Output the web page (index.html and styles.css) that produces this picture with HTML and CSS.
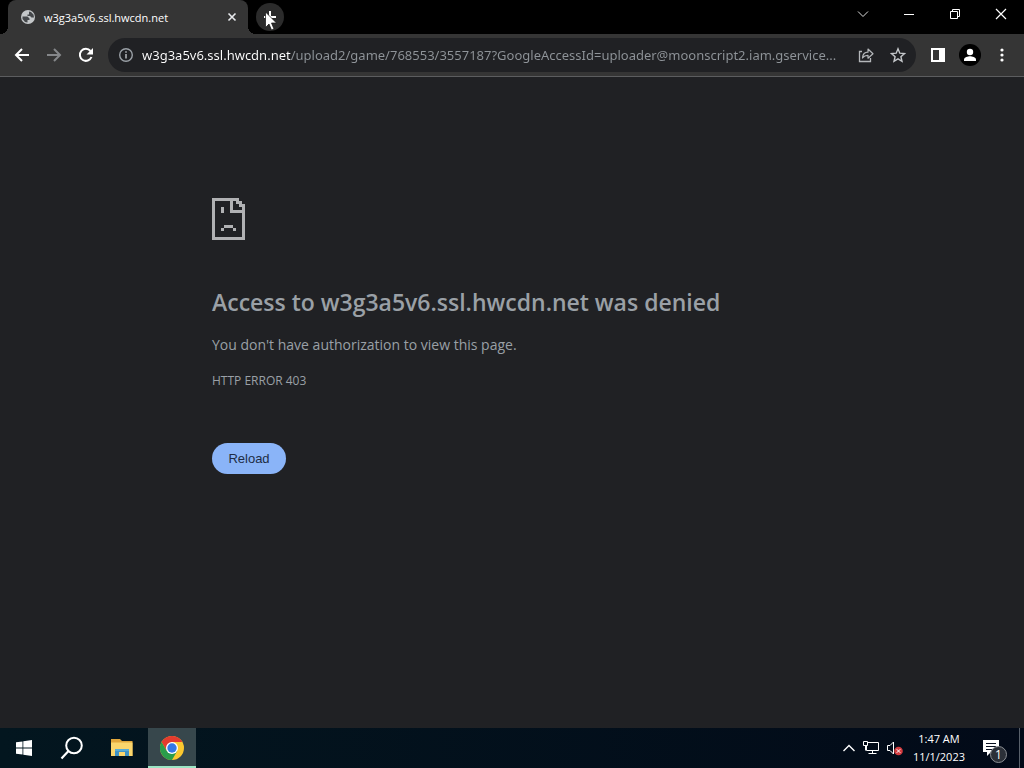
FILE: index.html
```html
<!DOCTYPE html>
<html lang="en">
<head>
  <meta charset="UTF-8" />
  <meta name="viewport" content="width=device-width, initial-scale=1.0" />
  <title>w3g3a5v6.ssl.hwcdn.net</title>
  <link rel="stylesheet" href="styles.css">
</head>
<body>
  <header class="browser">
    <div class="tab-strip">
      <div class="tab">
        <svg class="favicon" width="16" height="16" viewBox="0 0 16 16">
          <circle cx="8" cy="8" r="7" fill="#c4c7c9" />
          <path d="M2.500 7.500h5l2 2v1.500H7.500v2.500L5 13 2.500 10zM9 2.500l2 .4 2.500 2.600.5 3h-2.500L10 7H7.500V5.500H9z" fill="#45484b" />
        </svg>
        <span class="tab-title">w3g3a5v6.ssl.hwcdn.net</span>
        <button class="tab-close" aria-label="Close tab">
          <svg width="10" height="10" viewBox="0 0 10 10"><path d="M1.500 1.500l7 7M8.500 1.500l-7 7" stroke="#e8eaed" stroke-width="1.600" /></svg>
        </button>
      </div>
      <button class="new-tab" aria-label="New tab">
        <svg width="12" height="12" viewBox="0 0 12 12"><path d="M6 0v12M0 6h12" stroke="#fff" stroke-width="2" /></svg>
        <svg class="cursor" width="12" height="20" viewBox="0 0 12 20"><path d="M.5 1v15.500l3.500-3.500 2.500 6 2.500-1-2.500-6h5z" fill="#fff" stroke="#111" stroke-width=".7" /></svg>
      </button>
      <div class="window-buttons">
        <button aria-label="Search tabs">
          <svg width="12" height="12" viewBox="0 0 12 12"><path d="M1 3.500l5 5 5-5" fill="none" stroke="#ddd" /></svg>
        </button>
        <button aria-label="Minimize">
          <svg width="12" height="12" viewBox="0 0 12 12"><path d="M1 6.500h10" stroke="#fff" /></svg>
        </button>
        <button aria-label="Restore">
          <svg width="12" height="12" viewBox="0 0 12 12"><path d="M1.500 3.500h7v7h-7zM3.500 3.500v-2h7v7h-2" fill="none" stroke="#fff" /></svg>
        </button>
        <button aria-label="Close">
          <svg width="12" height="12" viewBox="0 0 12 12"><path d="M1 1l10 10M11 1L1 11" stroke="#fff" stroke-width="1.200" /></svg>
        </button>
      </div>
    </div>

    <div class="toolbar">
      <button class="tool" aria-label="Back">
        <svg width="16" height="16" viewBox="0 0 16 16"><path d="M15 8H2M8 2L2 8l6 6" fill="none" stroke="#fff" stroke-width="2" /></svg>
      </button>
      <button class="tool" aria-label="Forward" disabled>
        <svg width="16" height="16" viewBox="0 0 16 16"><path d="M1 8h13M8 2l6 6-6 6" fill="none" stroke="#85878a" stroke-width="2" /></svg>
      </button>
      <button class="tool" aria-label="Reload page">
        <svg width="16" height="16" viewBox="0 0 16 16"><path d="M13.500 10A6 6 0 1 1 12.500 4" fill="none" stroke="#fff" stroke-width="2" /><path d="M15 1v6.500H8.500z" fill="#fff" /></svg>
      </button>
      <div class="address-bar">
        <button class="site-info" aria-label="View site information">
          <svg width="16" height="16" viewBox="0 0 16 16"><circle cx="8" cy="8" r="6.300" fill="none" stroke="#9aa0a6" stroke-width="1.400" /><path d="M8 7v4.500M8 4.300v1.500" stroke="#b5b9bd" stroke-width="1.500" /></svg>
        </button>
        <input class="url" type="text" aria-label="Address and search bar" value="w3g3a5v6.ssl.hwcdn.net/upload2/game/768553/3557187?GoogleAccessId=uploader@moonscript2.iam.gservice...">
        <button class="bar-action" aria-label="Share this page">
          <svg width="16" height="16" viewBox="0 0 16 16"><path d="M4 4.500H1.500v10h11V11" fill="none" stroke="#b4b7ba" stroke-width="1.300" /><path d="M4.500 11c.3-4 2.500-5.800 5.500-5.800V2l5 4.700-5 4.500V8.300C7.500 8.200 6 9 4.500 11z" fill="none" stroke="#b4b7ba" stroke-width="1.200" stroke-linejoin="round" /></svg>
        </button>
        <button class="bar-action" aria-label="Bookmark this tab">
          <svg width="16" height="16" viewBox="0 0 16 16"><path d="M8 1.800l1.800 4.400 4.700.4-3.600 3.100 1.100 4.600L8 11.800l-4 2.500 1.100-4.600-3.600-3.100 4.700-.4z" fill="none" stroke="#c4c7ca" stroke-width="1.400" /></svg>
        </button>
      </div>
      <button class="tool" aria-label="Side panel">
        <svg width="16" height="16" viewBox="0 0 16 16"><path d="M1 1h14v14H1zM3 3v10h6V3z" fill="#fff" fill-rule="evenodd" /></svg>
      </button>
      <button class="tool" aria-label="Profile">
        <svg width="22" height="22" viewBox="0 0 22 22"><circle cx="11" cy="11" r="11" fill="#000" /><circle cx="11" cy="8" r="3.200" fill="#fff" /><path d="M5 17v-1.500c0-2.300 4-3.300 6-3.300s6 1 6 3.300V17z" fill="#fff" /></svg>
      </button>
      <button class="tool" aria-label="Menu">
        <svg width="16" height="16" viewBox="0 0 16 16" fill="#fff"><circle cx="8" cy="3" r="1.600" /><circle cx="8" cy="8" r="1.600" /><circle cx="8" cy="13" r="1.600" /></svg>
      </button>
    </div>
  </header>

  <main class="page">
    <div class="error">
      <svg class="error-icon" width="33" height="42" viewBox="0 0 11 14" shape-rendering="crispEdges">
        <path d="M0 0h9v1h1v1h1v12H0zM1 1v12h9V5H6V1zM7 1v3h3V3H9V2H8V1z" fill="#b0b1b3" fill-rule="evenodd" />
        <path d="M3 3h1v2H3zM4 9h3v1H4zM3 10h1v1H3zM7 10h1v1H7z" fill="#b0b1b3" />
      </svg>
      <h1>Access to w3g3a5v6.ssl.hwcdn.net was denied</h1>
      <p class="summary">You don't have authorization to view this page.</p>
      <p class="error-code">HTTP ERROR 403</p>
      <button class="reload">Reload</button>
    </div>
  </main>

  <footer class="taskbar">
    <button class="task" aria-label="Start">
      <svg width="16" height="16" viewBox="0 0 16 16" fill="#fff"><path d="M0 2.300l6.500-.9v6.200H0zM7.300 1.300L16 0v7.600H7.300zM0 8.400h6.500v6.200L0 13.700zM7.300 8.400H16V16l-8.700-1.300z" /></svg>
    </button>
    <button class="task" aria-label="Search">
      <svg width="24" height="24" viewBox="0 0 24 24"><circle cx="14" cy="9.500" r="7.800" fill="none" stroke="#fff" stroke-width="2" /><path d="M8.500 15L1.500 22.500" stroke="#fff" stroke-width="2.200" /></svg>
    </button>
    <button class="task" aria-label="File Explorer">
      <svg width="22" height="20" viewBox="0 0 22 20"><path d="M0 1h9l2 2h10.500v15H0z" fill="#e2a73b" /><path d="M0 4.500h21.500V18H0z" fill="#fbd66c" /><path d="M4 18v-7h14v7h-4v-4H8v4z" fill="#3f93c5" /><path d="M4 11h14v2H4z" fill="#58abd4" /></svg>
    </button>
    <button class="task active" aria-label="Google Chrome">
      <svg width="24" height="24" viewBox="0 0 24 24"><circle cx="12" cy="12" r="12" fill="#fbc82f" /><path d="M1.600 6A12 12 0 0 1 22.400 6H12l-5.200 9z" fill="#e33b2e" /><path d="M1.600 6A12 12 0 0 0 12 24l5.200-9-10.400 0z" fill="#2a9d4b" /><circle cx="12" cy="12" r="6" fill="#fff" /><circle cx="12" cy="12" r="4.700" fill="#3478e5" /></svg>
    </button>
    <div class="tray">
      <button aria-label="Show hidden icons">
        <svg width="14" height="16" viewBox="0 0 14 16"><path d="M1.500 11L7 5.500l5.500 5.500" fill="none" stroke="#fff" stroke-width="1.400" /></svg>
      </button>
      <button aria-label="Network">
        <svg width="18" height="16" viewBox="0 0 18 16"><path d="M5 2.500h11.500v8H4.500V6M10.500 10.500v3M6.500 13.500h8M1.500 1.500h4v4h-4zM3.500 5.500v5" fill="none" stroke="#fff" /></svg>
      </button>
      <button aria-label="Volume muted">
        <svg width="18" height="16" viewBox="0 0 18 16"><path d="M1.500 5.500H4L7.500 2v12L4 10.500H1.500z" fill="none" stroke="#fff" /><circle cx="12.500" cy="11" r="4.300" fill="#d43c40" /><path d="M10.700 9.200l3.600 3.600M14.300 9.200l-3.600 3.600" stroke="#fff" /></svg>
      </button>
      <div class="clock">
        <time>1:47 AM</time>
        <time>11/1/2023</time>
      </div>
      <button class="notifications" aria-label="Notifications">
        <svg width="16" height="16" viewBox="0 0 16 16"><path d="M0 0h16v12H8l-4 4v-4H0z" fill="#fff" /><path d="M3 3.500h10M3 6.500h10M3 9.500h7" stroke="#081020" /></svg>
        <span class="badge">1</span>
      </button>
      <span class="show-desktop"></span>
    </div>
  </footer>
</body>
</html>
```
FILE: styles.css
```css
* {
  box-sizing: border-box;
}

body {
  margin: 0;
  min-height: 100vh;
  display: flex;
  flex-direction: column;
  background-color: #202124;
  color: #9aa0a6;
  font-family: 'Segoe UI', 'Open Sans', sans-serif;
}

button {
  display: flex;
  align-items: center;
  justify-content: center;
  padding: 0;
  border: none;
  background: none;
  font-family: inherit;
}

svg {
  flex: none;
}

.tab-strip {
  height: 34px;
  display: flex;
  align-items: flex-start;
  padding-left: 8px;
  background-color: #000;
}

.tab {
  position: relative;
  width: 240px;
  height: 34px;
  display: flex;
  align-items: center;
  gap: 8px;
  padding: 0 8px 0 12px;
  border-radius: 8px 8px 0 0;
  background-color: #353535;
  color: #fff;
}

/* curved feet of the active tab */
.tab::before,
.tab::after {
  content: '';
  position: absolute;
  bottom: 0;
  width: 8px;
  height: 8px;
}

.tab::before {
  right: 100%;
  background: radial-gradient(circle at 0 0, #000 8px, #353535 8px);
}

.tab::after {
  left: 100%;
  background: radial-gradient(circle at 100% 0, #000 8px, #353535 8px);
}

.tab-title {
  flex: 1;
  font-size: 11px;
  white-space: nowrap;
}

.tab-close {
  width: 16px;
  height: 16px;
}

.new-tab {
  position: relative;
  width: 28px;
  height: 28px;
  margin: 3px 0 0 8px;
  border-radius: 50%;
  background-color: #2b2b2b;
}

.cursor {
  position: absolute;
  left: 9px;
  top: 8px;
}

.window-buttons {
  display: flex;
  margin-left: auto;
}

.window-buttons button {
  width: 46px;
  height: 28px;
}

.toolbar {
  height: 43px;
  display: flex;
  align-items: center;
  gap: 4px;
  padding: 0 8px;
  border-bottom: 1px solid #5c5d5f;
  background-color: #353535;
}

.tool {
  width: 28px;
  height: 28px;
}

.address-bar {
  flex: 1;
  min-width: 0;
  height: 34px;
  display: flex;
  align-items: center;
  margin: 0 4px;
  padding: 0 4px 0 10px;
  border-radius: 17px;
  background-color: #202124;
}

.site-info {
  width: 16px;
  height: 28px;
  margin-right: 8px;
}

/* host is white, the rest of the address is grey */
.url {
  flex: 1;
  min-width: 0;
  margin-right: 4px;
  padding: 0;
  border: none;
  outline: none;
  background: linear-gradient(to right, #fff 149px, #8f9499 149px);
  background-clip: text;
  -webkit-background-clip: text;
  color: transparent;
  font-family: 'Segoe UI', 'Noto Sans', sans-serif;
  font-size: 13px;
  line-height: 20px;
  text-overflow: ellipsis;
}

.bar-action {
  width: 28px;
  height: 28px;
}

.bar-action + .bar-action {
  margin-left: 4px;
}

.page {
  flex: 1;
}

.error {
  max-width: 600px;
  margin: 0 auto;
  padding-top: 121px;
}

.error-icon {
  display: block;
  margin-bottom: 47px;
}

h1 {
  margin: 0 0 16px;
  font-size: 23px;
  font-weight: 600;
  line-height: 30px;
}

.summary {
  margin: 0;
  font-size: 14px;
  line-height: 24px;
}

.error-code {
  margin: 12px 0 0;
  font-size: 12px;
  line-height: 24px;
}

.reload {
  min-width: 74px;
  height: 31px;
  margin-top: 50px;
  padding: 0 16px;
  border-radius: 16px;
  background-color: #8ab4f8;
  color: #202c44;
  font-family: 'Liberation Sans', Arial, sans-serif;
  font-size: 13px;
}

.taskbar {
  height: 40px;
  display: flex;
  background: linear-gradient(to right, #03161f, #020a18);
}

.task {
  width: 48px;
  height: 40px;
}

.task:nth-child(3) {
  margin: 0 2px;
}

.task.active {
  border-top: 2px solid #37474c;
  border-bottom: 2px solid #9ce5c4;
  background-color: #37474c;
}

.tray {
  display: flex;
  align-items: center;
  gap: 6px;
  margin-left: auto;
}

.clock {
  display: flex;
  flex-direction: column;
  align-items: center;
  margin: 0 12px 0 3px;
  color: #fff;
  font-size: 11px;
  line-height: 18px;
}

.notifications {
  position: relative;
  width: 30px;
  height: 40px;
  justify-content: flex-start;
}

.badge {
  position: absolute;
  left: 7px;
  top: 18px;
  width: 17px;
  height: 17px;
  border: 1px solid #8b8f94;
  border-radius: 50%;
  background-color: #2b3038;
  color: #fff;
  font-size: 12px;
  line-height: 15px;
  text-align: center;
}

.show-desktop {
  width: 5px;
  height: 40px;
  border-left: 1px solid #59616b;
}
```
